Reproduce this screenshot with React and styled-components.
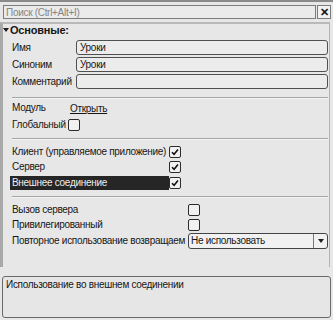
import React from 'react'
import styled, { createGlobalStyle } from 'styled-components'

const GlobalStyle = createGlobalStyle`
  html, body {
    margin: 0;
    padding: 0;
    background: #efefef;
  }
  body {
    font-family: "Liberation Sans", Arial, sans-serif;
    font-size: 10px;
    letter-spacing: -0.3px;
    color: #161616;
  }
`

const Window = styled.div`
  width: 333px;
  height: 320px;
  display: flex;
  flex-direction: column;
  background: #e7e7e7;
  border-top: 2px solid #8a8a8a;
  box-sizing: border-box;
  overflow: hidden;
`

const SearchRow = styled.div`
  display: flex;
  align-items: stretch;
  height: 14px;
  margin: 3px 2px 0 3px;
  gap: 1px;
`

const SearchInput = styled.div`
  flex: 1;
  border: 1px solid #7c7c7c;
  background: #ebebeb;
  color: #858585;
  line-height: 13px;
  padding-left: 2px;
`

const ClearButton = styled.div`
  width: 12px;
  border: 1px solid #7c7c7c;
  background: #f2f2f2;
  display: flex;
  align-items: center;
  justify-content: center;
  font-weight: bold;
  font-size: 11px;
`

const Body = styled.div`
  margin: 3px 3px 0 0;
  border-top: 2px solid #b9b9b9;
  border-left: 3px solid #a9a9a9;
  border-right: 1px solid #b5b5b5;
  height: 245px;
  box-sizing: border-box;
  display: flex;
  flex-direction: column;
`

const Section = styled.div`
  display: flex;
  align-items: center;
  height: 12px;
  font-weight: bold;
  font-size: 11px;
  letter-spacing: -0.2px;
  &::before {
    content: '';
    border-left: 3.5px solid transparent;
    border-right: 3.5px solid transparent;
    border-top: 4px solid #1e1e1e;
    margin-right: 1px;
  }
`

const Row = styled.div`
  display: flex;
  align-items: center;
  height: ${({ h }) => h}px;
  padding-left: 9px;
  white-space: nowrap;
`

const Label = styled.div`
  width: ${({ w }) => (w ? `${w}px` : 'auto')};
  flex: none;
  overflow: hidden;
  height: 14px;
  line-height: 14px;
  padding-left: ${({ selected }) => (selected ? '2px' : '0')};
  margin-left: ${({ selected }) => (selected ? '-2px' : '0')};
  background: ${({ selected }) => (selected ? '#262626' : 'transparent')};
  color: ${({ selected }) => (selected ? '#eeeeee' : 'inherit')};
`

const Field = styled.div`
  flex: 1;
  height: 13px;
  border: 1px solid #505050;
  border-radius: 3px;
  background: #ececec;
  line-height: 13px;
  padding-left: 3px;
  margin-right: 1px;
`

const Separator = styled.div`
  height: 1px;
  background: #a6a6a6;
  border-bottom: 1px solid #f4f4f4;
  margin: ${({ m }) => m};
`

const LinkText = styled.span`
  text-decoration: underline;
`

const Box = styled.div`
  width: 10px;
  height: 10px;
  flex: none;
  border: 1px solid #2b2b2b;
  border-radius: 2px;
  background: #f1f1f1;
  margin-left: ${({ ml }) => ml ?? 2}px;
  display: flex;
  align-items: center;
  justify-content: center;
`

const Select = styled.div`
  flex: 1;
  display: flex;
  height: 14px;
  border: 1px solid #444;
  border-radius: 3px;
  background: #f1f1f1;
  margin-right: 1px;
  overflow: hidden;
`

const SelectValue = styled.div`
  flex: 1;
  line-height: 14px;
  padding-left: 2px;
`

const SelectArrow = styled.div`
  width: 13px;
  border-left: 1px solid #777;
  display: flex;
  align-items: center;
  justify-content: center;
  &::after {
    content: '';
    border-left: 3.5px solid transparent;
    border-right: 3.5px solid transparent;
    border-top: 4px solid #1e1e1e;
  }
`

const Notes = styled.div`
  margin: 9px 2px 2px 2px;
  flex: 1;
  border: 1px solid #6a6a6a;
  border-radius: 3px;
  background: #e6e6e6;
  padding: 2px 3px;
`

const Check = ({ on, ml }) => (
  <Box ml={ml}>
    {on && (
      <svg width="8" height="8" viewBox="0 0 8 8">
        <path d="M1 4.2 L3.1 6.3 L7 1.6" fill="none" stroke="#111" strokeWidth="1.6" />
      </svg>
    )}
  </Box>
)

export default function App() {
  return (
    <Window>
      <GlobalStyle />
      <SearchRow>
        <SearchInput>Поиск (Ctrl+Alt+I)</SearchInput>
        <ClearButton>✕</ClearButton>
      </SearchRow>
      <Body>
        <Section>Основные:</Section>
        <Row h={3} />
        <Row h={17}>
          <Label w={64}>Имя</Label>
          <Field>Уроки</Field>
        </Row>
        <Row h={17}>
          <Label w={64}>Синоним</Label>
          <Field>Уроки</Field>
        </Row>
        <Row h={17}>
          <Label w={64}>Комментарий</Label>
          <Field />
        </Row>
        <Separator m="7px 1px 0 9px" />
        <Row h={18}>
          <Label w={58}>Модуль</Label>
          <LinkText>Открыть</LinkText>
        </Row>
        <Row h={16}>
          <Label>Глобальный</Label>
          <Check />
        </Row>
        <Separator m="5px 1px 4px 9px" />
        <Row h={15}>
          <Label w={155}>Клиент (управляемое приложение)</Label>
          <Check on />
        </Row>
        <Row h={16}>
          <Label w={155}>Сервер</Label>
          <Check on />
        </Row>
        <Row h={15}>
          <Label w={157} selected>Внешнее соединение</Label>
          <Check on ml={0} />
        </Row>
        <Separator m="6px 1px 4px 9px" />
        <Row h={15}>
          <Label w={174}>Вызов сервера</Label>
          <Check />
        </Row>
        <Row h={15}>
          <Label w={174}>Привилегированный</Label>
          <Check />
        </Row>
        <Row h={17}>
          <Label w={176}>Повторное использование возвращаем</Label>
          <Select>
            <SelectValue>Не использовать</SelectValue>
            <SelectArrow />
          </Select>
        </Row>
      </Body>
      <Notes>Использование во внешнем соединении</Notes>
    </Window>
  )
}
